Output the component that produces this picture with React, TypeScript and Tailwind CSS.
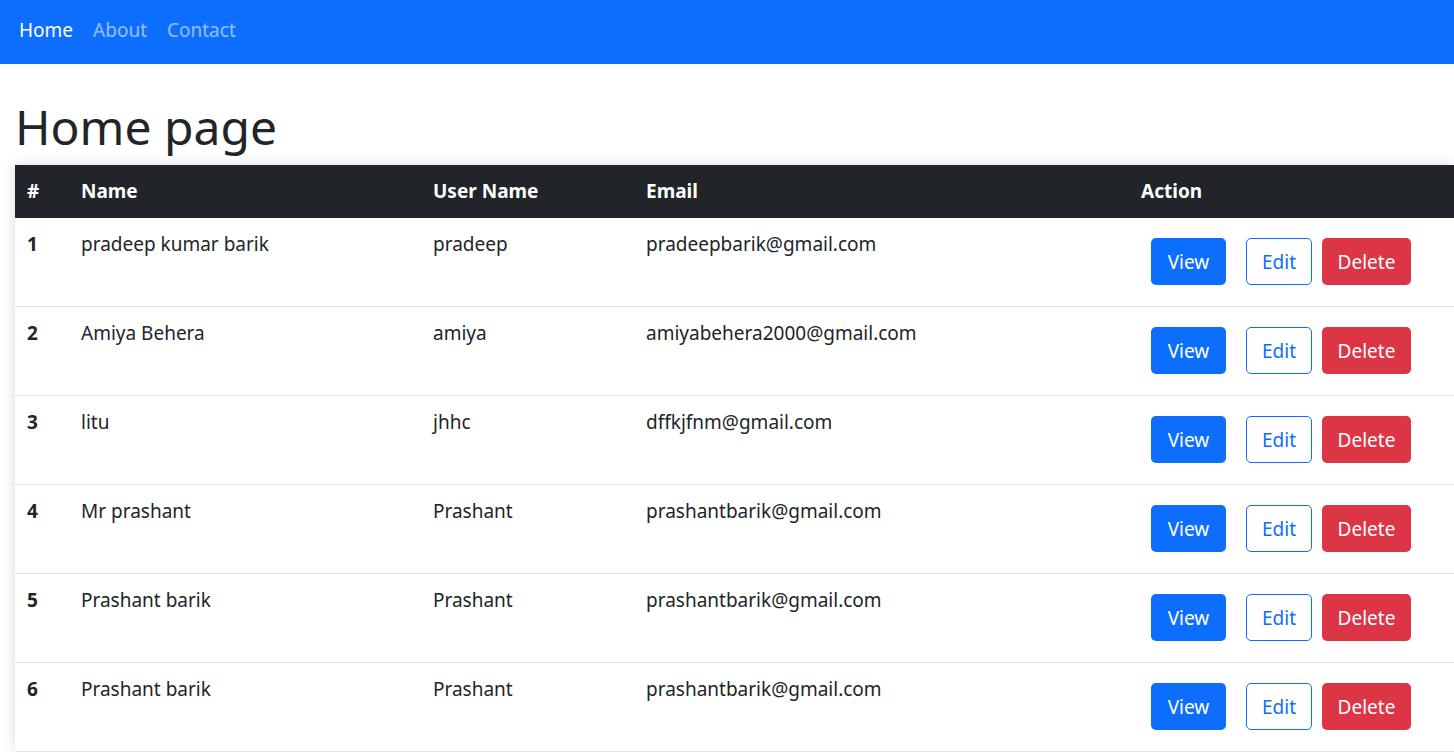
import React from 'react';

interface User {
  id: number;
  name: string;
  username: string;
  email: string;
}

const users: User[] = [
  { id: 1, name: 'pradeep kumar barik', username: 'pradeep', email: 'pradeepbarik@gmail.com' },
  { id: 2, name: 'Amiya Behera', username: 'amiya', email: 'amiyabehera2000@gmail.com' },
  { id: 3, name: 'litu', username: 'jhhc', email: 'dffkjfnm@gmail.com' },
  { id: 4, name: 'Mr prashant', username: 'Prashant', email: 'prashantbarik@gmail.com' },
  { id: 5, name: 'Prashant barik', username: 'Prashant', email: 'prashantbarik@gmail.com' },
  { id: 6, name: 'Prashant barik', username: 'Prashant', email: 'prashantbarik@gmail.com' },
];

const Navbar: React.FC = () => (
  <nav className="h-[64px] bg-[#0d6efd] flex items-center px-[19px] pb-[4px] gap-[20px] text-[19px]">
    <a className="text-white">Home</a>
    <a className="text-white/55">About</a>
    <a className="text-white/55">Contact</a>
  </nav>
);

export default function App() {
  return (
    <div className="min-h-screen bg-white text-[#212529] overflow-hidden" style={{ fontFamily: '"Segoe UI", "Noto Sans", sans-serif' }}>
      <Navbar />

      <h1 className="ml-[15px] mt-[30px] mb-[6px] text-[48px] leading-[65px] font-normal">Home page</h1>

      <div className="ml-[15px] shadow-[0_0_12px_rgba(0,0,0,0.15)]">
        <table className="w-full table-fixed border-collapse text-[19px]">
          <colgroup>
            <col className="w-[54px]" />
            <col className="w-[352px]" />
            <col className="w-[213px]" />
            <col className="w-[495px]" />
            <col />
          </colgroup>
          <thead>
            <tr className="bg-[#212529] text-white font-bold text-left">
              <th className="px-[12px] py-[12px] leading-[29px]">#</th>
              <th className="px-[12px] py-[12px] leading-[29px]">Name</th>
              <th className="px-[12px] py-[12px] leading-[29px]">User Name</th>
              <th className="px-[12px] py-[12px] leading-[29px]">Email</th>
              <th className="px-[12px] py-[12px] leading-[29px]">Action</th>
            </tr>
          </thead>
          <tbody>
            {users.map((u) => (
              <tr key={u.id} className="border-b border-[#dee2e6] align-top">
                <td className="px-[12px] py-[12px] leading-[28px] font-bold">{u.id}</td>
                <td className="px-[12px] py-[12px] leading-[28px]">{u.name}</td>
                <td className="px-[12px] py-[12px] leading-[28px]">{u.username}</td>
                <td className="px-[12px] py-[12px] leading-[28px]">{u.email}</td>
                <td className="px-[12px] py-[12px]">
                  <div className="flex items-center mt-[8px] mb-[9px] ml-[10px]">
                    <button className="h-[47px] w-[75px] rounded-[5px] bg-[#0d6efd] text-white leading-[28px]">View</button>
                    <button className="h-[47px] w-[66px] ml-[20px] rounded-[5px] border border-[#0d6efd] text-[#0d6efd] bg-white leading-[28px]">Edit</button>
                    <button className="h-[47px] w-[89px] ml-[10px] rounded-[5px] bg-[#dc3545] text-white leading-[28px]">Delete</button>
                  </div>
                </td>
              </tr>
            ))}
          </tbody>
        </table>
      </div>
    </div>
  );
}
